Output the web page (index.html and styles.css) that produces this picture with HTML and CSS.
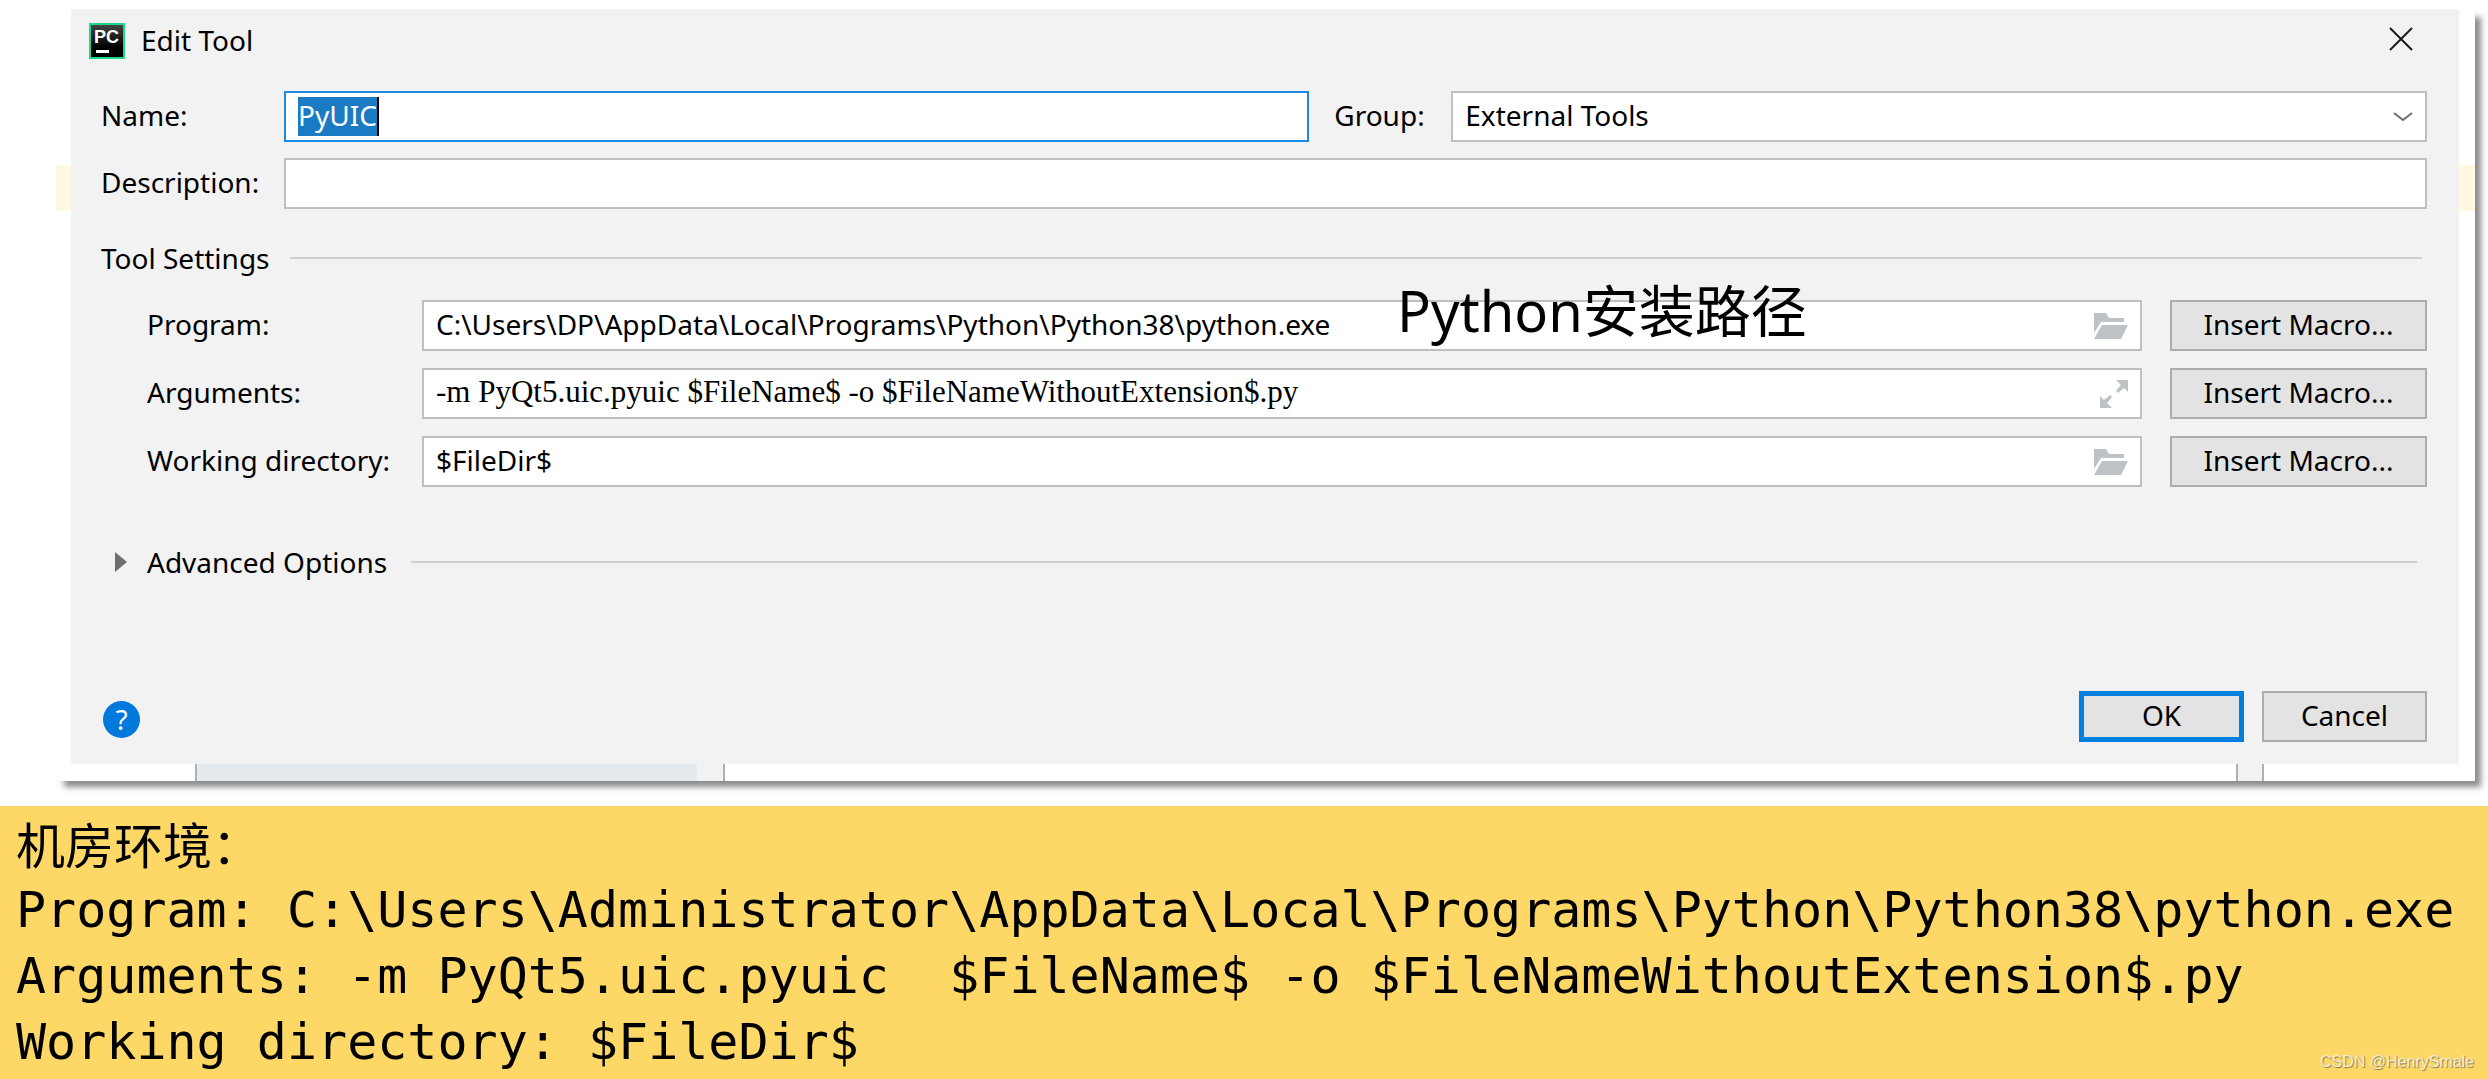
FILE: index.html
```html
<!DOCTYPE html>
<html lang="zh-CN">
<head>
<meta charset="utf-8">
<meta name="viewport" content="width=device-width, initial-scale=1">
<title>Edit Tool</title>
<link rel="stylesheet" href="styles.css">
</head>
<body>
<svg class="defs" aria-hidden="true">
  <symbol id="folder" viewBox="0 0 34 26">
    <path d="M0 0H12L15 5H30V9H7L0 20Z"/>
    <path d="M8 12H34L27 26H0Z"/>
  </symbol>
</svg>
<main class="backdrop">
  <form class="dialog">
    <header class="titlebar">
      <svg class="logo" viewBox="0 0 36 36" aria-hidden="true">
        <defs><linearGradient id="sheen" x1="0" y1="0" x2="0" y2="1"><stop offset="0" stop-color="#444"/><stop offset="0.7" stop-color="#000"/></linearGradient></defs>
        <rect width="36" height="36" fill="#21d789"/>
        <rect x="2" y="2" width="32" height="32" fill="url(#sheen)"/>
        <text class="logo-text" x="5" y="20">PC</text>
        <rect x="7" y="27" width="13" height="3" fill="#fff"/>
      </svg>
      <h1 class="title">Edit Tool</h1>
      <button class="close" type="button" aria-label="Close">
        <svg width="24" height="24" viewBox="0 0 24 24" aria-hidden="true"><path d="M1 1L23 23M23 1L1 23" stroke="#1a1a1a" stroke-width="2"/></svg>
      </button>
    </header>

    <div class="rows general">
      <div class="row">
        <label class="label" for="name">Name:</label>
        <div class="field name focused"><input class="selected" id="name" value="PyUIC" size="5"></div>
        <label class="group-label" for="group">Group:</label>
        <div class="field group">
          <select class="input" id="group"><option>External Tools</option></select>
          <svg class="chevron" width="20" height="10" viewBox="0 0 20 10" aria-hidden="true"><path d="M1 1L10 8L19 1" fill="none" stroke="#6e6e6e" stroke-width="2"/></svg>
        </div>
      </div>
      <div class="row">
        <label class="label" for="description">Description:</label>
        <div class="field"><input class="input" id="description"></div>
      </div>
    </div>

    <h2 class="heading">Tool Settings</h2>

    <div class="rows settings">
      <div class="row">
        <label class="label" for="program">Program:</label>
        <div class="field">
          <input class="input" id="program" value="C:\Users\DP\AppData\Local\Programs\Python\Python38\python.exe">
          <svg class="folder" aria-hidden="true"><use href="#folder"/></svg>
          <span class="note">Python安装路径</span>
        </div>
        <button class="button macro" type="button">Insert Macro...</button>
      </div>
      <div class="row">
        <label class="label" for="arguments">Arguments:</label>
        <div class="field">
          <input class="input serif" id="arguments" value="-m PyQt5.uic.pyuic $FileName$ -o $FileNameWithoutExtension$.py">
          <svg class="expand" viewBox="0 0 28 28" aria-hidden="true"><path d="M16 0H28V12L24 8L18 13L16 11L21 5Z"/><path d="M0 16L4 20L10 15L12 17L7 23L12 28H0Z"/></svg>
        </div>
        <button class="button macro" type="button">Insert Macro...</button>
      </div>
      <div class="row">
        <label class="label" for="directory">Working directory:</label>
        <div class="field">
          <input class="input" id="directory" value="$FileDir$">
          <svg class="folder" aria-hidden="true"><use href="#folder"/></svg>
        </div>
        <button class="button macro" type="button">Insert Macro...</button>
      </div>
    </div>

    <h2 class="heading advanced">
      <svg class="triangle" width="12" height="20" viewBox="0 0 12 20" aria-hidden="true"><path d="M0 0L12 10L0 20Z"/></svg>
      Advanced Options
    </h2>

    <footer class="actions">
      <button class="help" type="button" aria-label="Help">?</button>
      <button class="button primary" type="submit">OK</button>
      <button class="button" type="button">Cancel</button>
    </footer>
  </form>
  <div class="behind" aria-hidden="true">
    <div class="pane"></div>
    <div class="scrollbar"></div>
  </div>
</main>

<section class="lab">
  <p class="lab-title">机房环境：</p>
  <p class="line">Program: C:\Users\Administrator\AppData\Local\Programs\Python\Python38\python.exe</p>
  <p class="line">Arguments: -m PyQt5.uic.pyuic  $FileName$ -o $FileNameWithoutExtension$.py</p>
  <p class="line">Working directory: $FileDir$</p>
  <span class="watermark">CSDN @HenrySmale</span>
</section>
</body>
</html>
```
FILE: styles.css
```css
* {
  box-sizing: border-box;
}

body {
  margin: 0;
  min-height: 100vh;
  display: flex;
  flex-direction: column;
  background: #fff;
  color: #000;
  font-family: "Noto Sans", "Noto Sans CJK SC", sans-serif;
  font-size: 28px;
  line-height: 38px;
}

h1, h2, p {
  margin: 0;
  font-size: inherit;
  font-weight: 400;
}

input, select, button {
  margin: 0;
  border: 0;
  padding: 0;
  border-radius: 0;
  background: none;
  color: inherit;
  font: inherit;
}

.defs {
  position: absolute;
  width: 0;
  height: 0;
}

/* window behind the dialog */
.backdrop {
  margin: 9px 13px 25px 56px;
  padding: 0 16px 0 15px;
  background: linear-gradient(#fff 156px, #fff9e1 156px, #fff9e1 202px, #fff 202px);
  box-shadow: 7px 7px 6px -1px #8c8c8c;
}

.dialog {
  padding: 0 32px 22px 30px;
  background: #f2f2f2;
}

.behind {
  display: flex;
  justify-content: space-between;
  height: 17px;
  padding: 0 195px 0 124px;
}

.pane {
  width: 530px;
  border: solid #b0b0b0;
  border-width: 0 2px;
  background: linear-gradient(90deg, #e5eaef 500px, #f2f2f2 500px);
}

.scrollbar {
  width: 28px;
  border: solid #b0b0b0;
  border-width: 0 2px;
  background: #f2f2f2;
}

.titlebar {
  display: flex;
  align-items: center;
  height: 64px;
  margin-left: -12px;
}

.logo {
  width: 36px;
  height: 36px;
}

.logo-text {
  fill: #fff;
  font: 700 18px "Liberation Sans", sans-serif;
}

.title {
  margin-left: 16px;
  padding-bottom: 3px;
}

.close {
  display: flex;
  margin: 0 14px 0 auto;
  padding-bottom: 4px;
}

.rows {
  display: flex;
  flex-direction: column;
}

.general {
  gap: 16px;
  margin-top: 18px;
}

.settings {
  gap: 17px;
  margin: 23px 0 0 46px;
}

.row {
  display: flex;
  align-items: center;
}

.label {
  flex: none;
  width: 183px;
  padding-bottom: 3px;
}

.settings .label {
  width: 275px;
}

.group-label {
  flex: none;
  width: 117px;
  margin-left: 25px;
  padding-bottom: 3px;
}

.field {
  position: relative;
  flex: 1;
  display: flex;
  align-items: center;
  height: 51px;
  padding: 0 12px;
  border: 2px solid #bfbfbf;
  background: #fff;
}

.field.name {
  flex: 1026 1 0;
}

.field.group {
  flex: 975 1 0;
}

.field.focused {
  border-color: #1a8ce6;
}

.input {
  flex: 1;
  min-width: 0;
  height: 41px;
  padding-bottom: 3px;
  outline: 0;
  appearance: none;
}

.selected {
  field-sizing: content;
  height: 39px;
  padding-bottom: 3px;
  border-right: 2px solid #000;
  background: #1a7bc4;
  color: #fff;
  outline: 0;
}

.serif {
  font-family: "Liberation Serif", serif;
  font-size: 31px;
}

.folder {
  width: 34px;
  height: 26px;
  fill: #bcc2c6;
}

.expand {
  width: 28px;
  height: 28px;
  fill: #bcc2c6;
}

.note {
  position: absolute;
  top: -28px;
  left: 973px;
  font-size: 56px;
  line-height: 72px;
  white-space: nowrap;
}

.button {
  width: 165px;
  height: 51px;
  padding-bottom: 3px;
  border: 2px solid #adadad;
  background: #e3e3e3;
}

.button.macro {
  width: 257px;
  margin-left: 28px;
}

.button.primary {
  border: 5px solid #007fe0;
}

.heading {
  display: flex;
  align-items: center;
  margin-top: 30px;
}

.heading::after {
  content: "";
  flex: 1;
  height: 2px;
  margin: 0 5px 0 20px;
  background: #cfcfcf;
}

.heading.advanced {
  margin: 56px 5px 0 14px;
}

.heading.advanced::after {
  margin-left: 24px;
}

.triangle {
  margin-right: 20px;
  fill: #6e6e6e;
}

.actions {
  display: flex;
  align-items: center;
  gap: 18px;
  margin-top: 110px;
}

.help {
  width: 37px;
  height: 37px;
  margin: 6px auto 0 2px;
  border-radius: 50%;
  background: #0078dc;
  color: #fff;
  line-height: 37px;
}

.lab {
  position: relative;
  flex: 1;
  padding: 7px 16px 0;
  background: #fdd866;
}

.lab-title {
  font-size: 49px;
  line-height: 64px;
}

.line {
  font-family: "DejaVu Sans Mono", monospace;
  font-size: 50px;
  line-height: 66px;
  white-space: pre;
}

.watermark {
  position: absolute;
  right: 14px;
  bottom: 4px;
  color: #f4ecd6;
  font-family: "Liberation Sans", sans-serif;
  font-size: 16px;
  line-height: 26px;
  text-shadow: 1px 1px 1px #8a7a48;
}
```
